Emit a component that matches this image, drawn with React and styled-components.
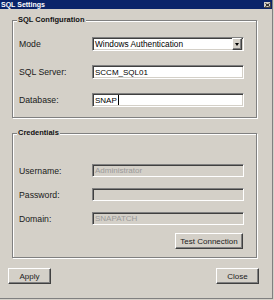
import React from 'react';
import styled, { createGlobalStyle } from 'styled-components';

const Global = createGlobalStyle`
  html, body {
    margin: 0;
    padding: 0;
    background: #d4d0c8;
  }
  body {
    font-family: "Liberation Sans", Arial, sans-serif;
  }
`;

const Window = styled.div`
  width: 273px;
  height: 299px;
  box-sizing: border-box;
  background: #d4d0c8;
  border-right: 1px solid #808080;
  border-bottom: 1px solid #808080;
  display: flex;
  flex-direction: column;
`;

const TitleBar = styled.div`
  height: 9px;
  background: #0a246a;
  display: flex;
  align-items: center;
  justify-content: space-between;
  padding: 0 1px 0 1px;
  color: #fff;
  font-weight: bold;
  font-size: 7px;
  line-height: 9px;
`;

const CloseBox = styled.span`
  width: 7px;
  height: 6px;
  background: #d4d0c8;
  display: flex;
  align-items: center;
  justify-content: center;
  box-shadow: inset -1px -1px 0 #404040;
`;

const Body = styled.div`
  display: flex;
  flex-direction: column;
  padding: 11px 13px 0 8px;
`;

const GroupBox = styled.div`
  margin: ${p => p.$top || 0}px 2px 0 4px;
  border: 1px solid #808080;
  box-shadow: inset 1px 1px 0 #fff, 1px 1px 0 #fff;
  display: flex;
  flex-direction: column;
`;

const Legend = styled.span`
  align-self: flex-start;
  margin: -5px 0 0 4px;
  padding: 0 1px;
  background: #d4d0c8;
  font-weight: bold;
  font-size: 7.5px;
  line-height: 8px;
  color: #111;
`;

const Fields = styled.div`
  display: grid;
  grid-template-columns: 73px 152px;
  grid-auto-rows: ${p => p.$row}px;
  row-gap: ${p => p.$gap}px;
  align-items: center;
  padding: ${p => p.$pad};
`;

const Label = styled.span`
  font-size: 8.7px;
  color: #1a1a1a;
  white-space: nowrap;
`;

const TextBox = styled.div`
  height: 100%;
  box-sizing: border-box;
  border: 1px solid;
  border-color: #808080 #fff #fff #808080;
  box-shadow: inset 1px 1px 0 #404040, inset -1px -1px 0 #d4d0c8;
  background: ${p => (p.$disabled ? '#d4d0c8' : '#fff')};
  color: ${p => (p.$disabled ? '#9a9a9a' : '#000')};
  font-size: 8px;
  display: flex;
  align-items: center;
  padding: 0 2px;
  white-space: nowrap;
  overflow: hidden;
`;

const Caret = styled.span`
  width: 1px;
  height: 10px;
  background: #000;
  margin-left: 1px;
`;

const SelectText = styled.span`
  flex: 1;
  font-size: 8.3px;
`;

const DropButton = styled.span`
  width: 10px;
  height: 100%;
  margin-right: -1px;
  box-sizing: border-box;
  background: #d4d0c8;
  border: 1px solid;
  border-color: #fff #404040 #404040 #fff;
  box-shadow: inset -1px -1px 0 #808080;
  display: flex;
  align-items: center;
  justify-content: center;
`;

const Arrow = styled.span`
  width: 0;
  height: 0;
  border-left: 2.5px solid transparent;
  border-right: 2.5px solid transparent;
  border-top: 3px solid #000;
`;

const ButtonRow = styled.div`
  display: flex;
  justify-content: ${p => p.$justify || 'flex-end'};
  padding: ${p => p.$pad || 0};
  margin-top: ${p => p.$top || 0}px;
`;

const Button = styled.button`
  width: ${p => p.$w}px;
  height: 16px;
  box-sizing: border-box;
  margin: 0;
  padding: 0;
  background: #d4d0c8;
  border: 1px solid;
  border-color: #fff #404040 #404040 #fff;
  box-shadow: inset -1px -1px 0 #808080;
  font-family: "Liberation Sans", Arial, sans-serif;
  font-size: 8px;
  color: #222;
`;

export default function App() {
  return (
    <>
      <Global />
      <Window>
        <TitleBar>
          <span>SQL Settings</span>
          <CloseBox>
            <svg width="5" height="4" viewBox="0 0 5 4">
              <path d="M0.5 0.5 L4.5 3.5 M4.5 0.5 L0.5 3.5" stroke="#000" strokeWidth="1" />
            </svg>
          </CloseBox>
        </TitleBar>
        <Body>
          <GroupBox>
            <Legend>SQL Configuration</Legend>
            <Fields $row={14} $gap={14} $pad="13px 0 10px 6px">
              <Label>Mode</Label>
              <TextBox>
                <SelectText>Windows Authentication</SelectText>
                <DropButton>
                  <Arrow />
                </DropButton>
              </TextBox>
              <Label>SQL Server:</Label>
              <TextBox>SCCM_SQL01</TextBox>
              <Label>Database:</Label>
              <TextBox>
                SNAP
                <Caret />
              </TextBox>
            </Fields>
          </GroupBox>
          <GroupBox $top={15}>
            <Legend>Credentials</Legend>
            <Fields $row={13} $gap={11} $pad="27px 0 0 6px">
              <Label>Username:</Label>
              <TextBox $disabled>Administrator</TextBox>
              <Label>Password:</Label>
              <TextBox $disabled />
              <Label>Domain:</Label>
              <TextBox $disabled>SNAPATCH</TextBox>
            </Fields>
            <ButtonRow $top={8} $pad="0 13px 8px 0">
              <Button $w={68}>Test Connection</Button>
            </ButtonRow>
          </GroupBox>
          <ButtonRow $top={10} $justify="space-between">
            <Button $w={43}>Apply</Button>
            <Button $w={43}>Close</Button>
          </ButtonRow>
        </Body>
      </Window>
    </>
  );
}
